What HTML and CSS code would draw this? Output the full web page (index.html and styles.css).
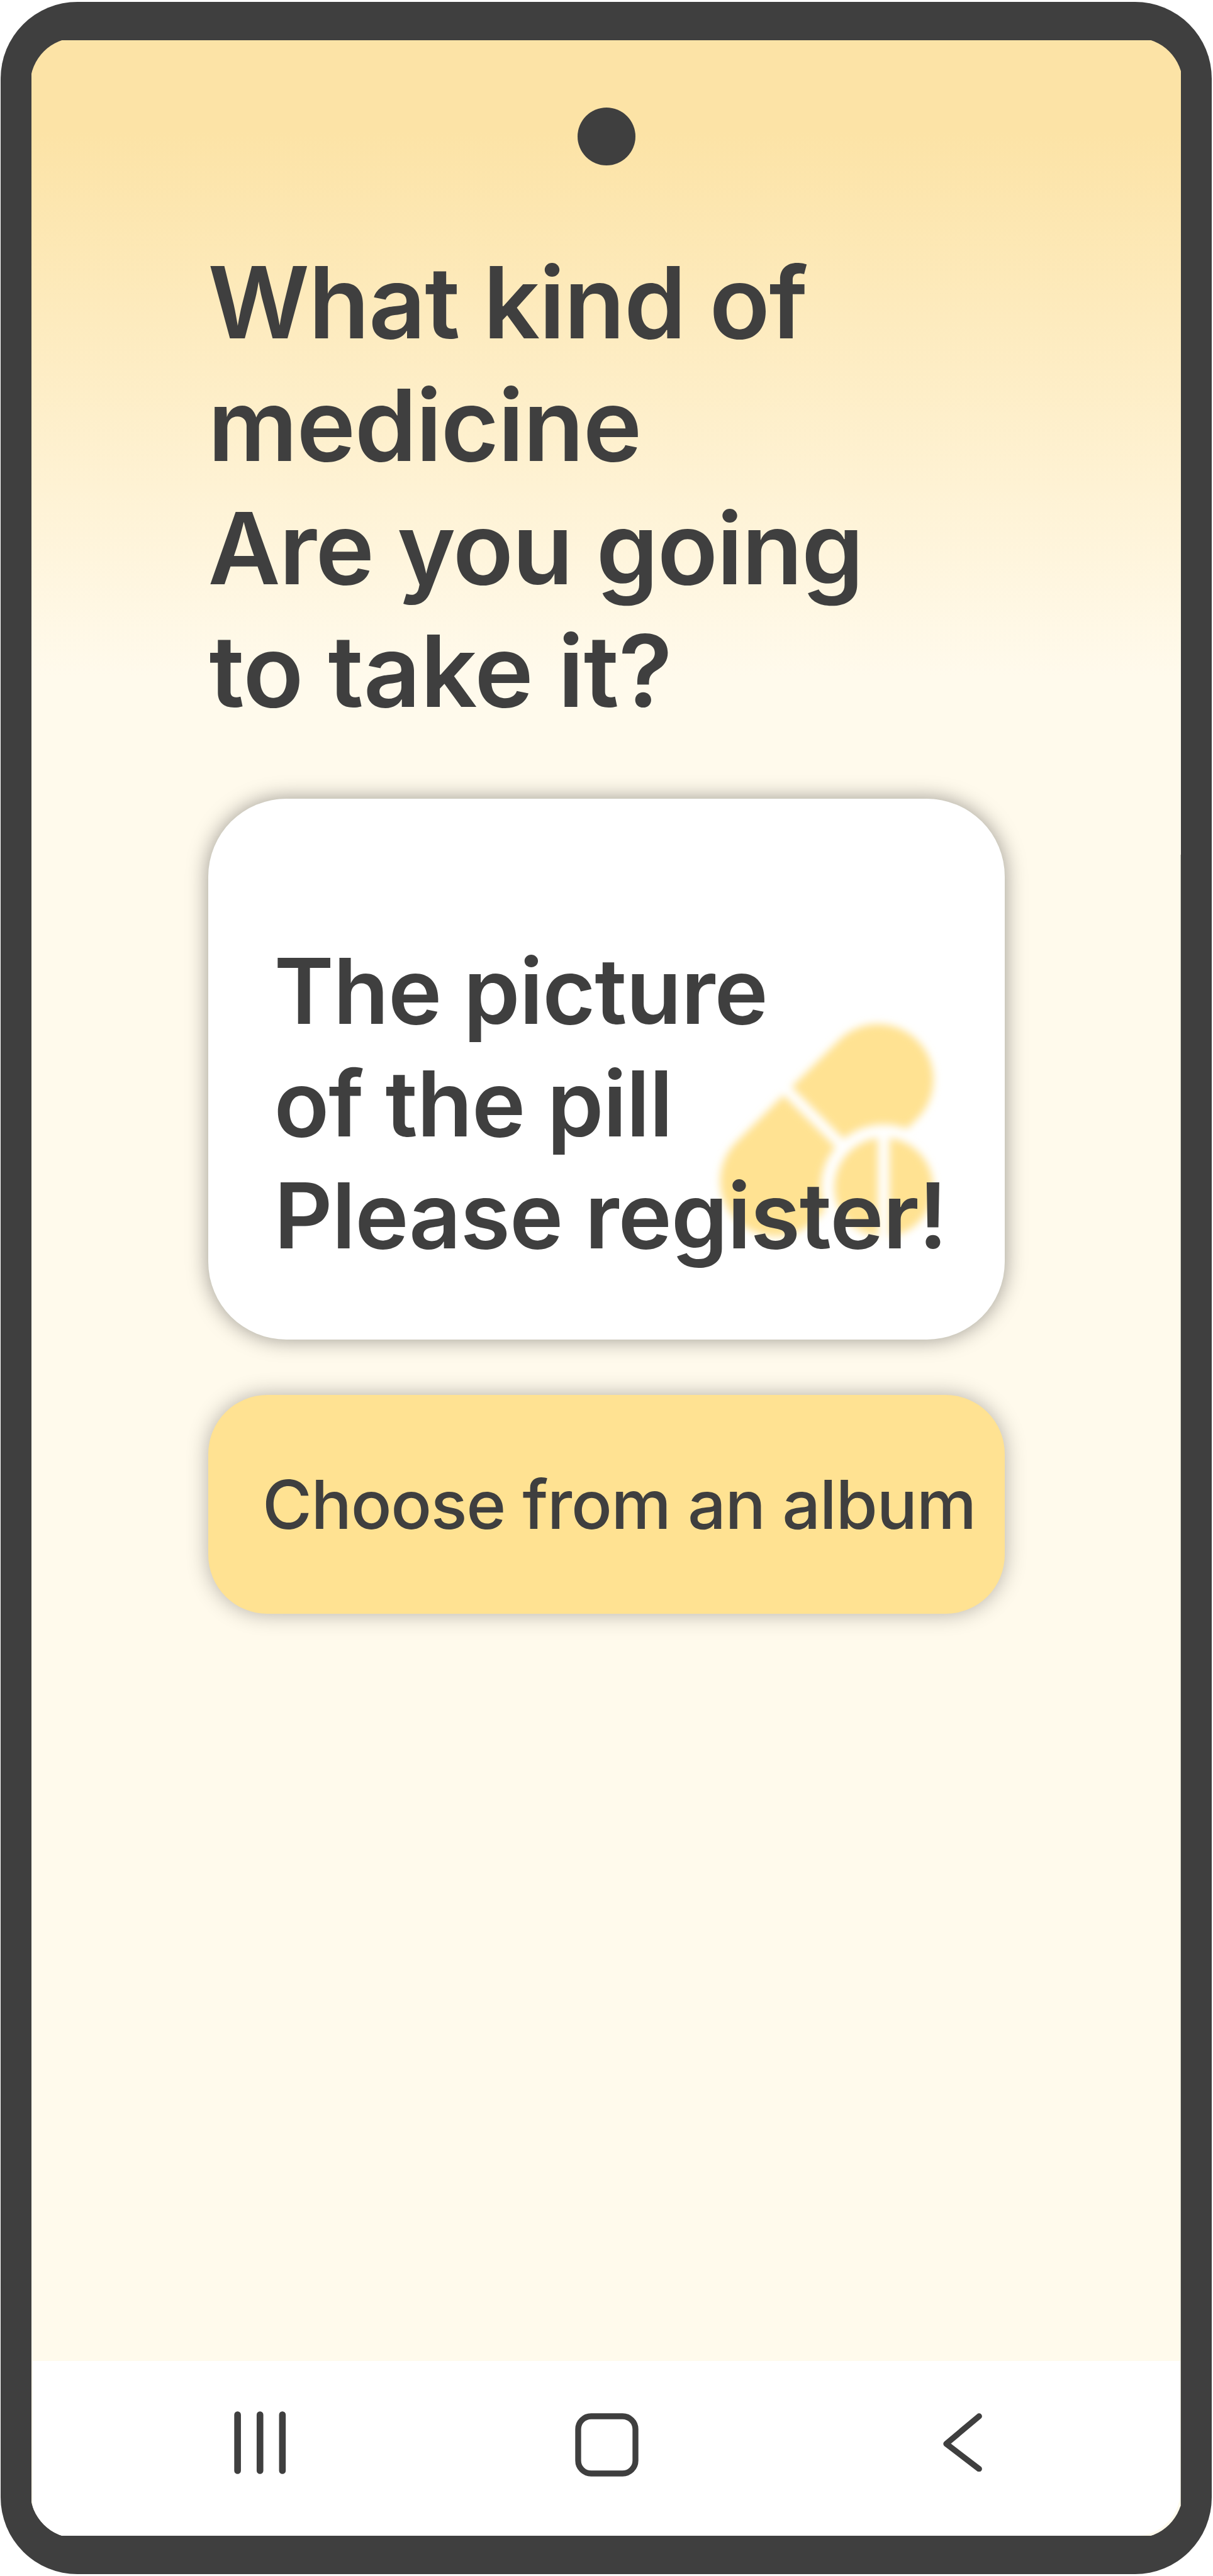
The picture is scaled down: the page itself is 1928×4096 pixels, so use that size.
FILE: index.html
```html
<!DOCTYPE html>
<html lang="en">
<head>
<meta charset="utf-8">
<title>Register medicine</title>
<link rel="stylesheet" href="styles.css">
</head>
<body>
<div class="phone">
  <div class="bezel">
    <div class="screen">
      <div class="status"><span class="camera"></span></div>
      <main class="content">
        <h1 class="question">
          <span class="line">What kind of</span>
          <span class="line">medicine</span>
          <span class="line line-tight">Are you going</span>
          <span class="line line-loose">to take it?</span>
        </h1>
        <section class="card">
          <svg class="pills" viewBox="0 0 640 640" aria-hidden="true">
            <defs>
              <filter id="soft" filterUnits="userSpaceOnUse" x="0" y="0" width="640" height="640"><feGaussianBlur stdDeviation="10.500"/></filter>
              <mask id="cut" maskUnits="userSpaceOnUse" x="0" y="0" width="640" height="640">
                <rect width="640" height="640" fill="#fff"/>
                <circle cx="467" cy="470" r="160" fill="#000"/>
                <path d="M108 111L420 423" stroke="#000" stroke-width="29"/>
              </mask>
            </defs>
            <g filter="url(#soft)" fill="#ffe292">
              <g mask="url(#cut)"><path d="M192 454L452 196" stroke="#ffe292" stroke-width="282" stroke-linecap="round"/></g>
              <path d="M452 344.900V595.100A126 126 0 0 1 452 344.900ZM481 344.900V595.100A126 126 0 0 0 481 344.900Z"/>
            </g>
          </svg>
          <p class="card-text">The picture<br>of the pill<br>Please register!</p>
        </section>
        <button class="album" type="button">Choose from an album</button>
      </main>
      <nav class="navbar">
        <svg class="recent" viewBox="0 0 132 160"><path d="M9 9V151M66 9V151M123 9V151"/></svg>
        <svg class="home" viewBox="0 0 162 162"><rect x="8" y="8" width="146" height="146" rx="33"/></svg>
        <svg class="back" viewBox="0 0 100 150"><path d="M91.500 8L8 78L91.500 142"/></svg>
      </nav>
    </div>
  </div>
</div>
</body>
</html>
```
FILE: styles.css
```css
* { box-sizing: border-box; }

body {
  margin: 0;
  background: #fff;
  font-family: Inter, "Liberation Sans", sans-serif;
  color: #3f3f3f;
}

.phone {
  width: 1925px;
  height: 4090px;
  margin: 3px 0 0 1px;
  padding: 57px 46.500px;
  border-radius: 122px;
  background: #3f3f3f;
}

.bezel {
  height: 100%;
  padding: 4.400px 2.500px;
  border-radius: 74px;
  overflow: hidden;
}

.screen {
  position: relative;
  display: flex;
  flex-direction: column;
  height: 100%;
  background: linear-gradient(#fce3a6 0, #fce3a6 145px, #fffaec 1010px);
}

/* thin edge highlight along the lower right side of the glass */
.screen::after {
  content: "";
  position: absolute;
  top: 1295px;
  right: 0;
  bottom: 0;
  width: 1.500px;
  background: #cfcdc0;
}

.status {
  display: flex;
  justify-content: center;
  padding-top: 107px;
}

.camera {
  width: 92px;
  height: 92px;
  border-radius: 50%;
  background: #3f3f3f;
}

.content {
  display: flex;
  flex-direction: column;
  flex: 1;
  padding: 119.400px 280.500px 0;
}

.question {
  margin: 0;
  height: 886.800px;
  font-size: 158.300px;
  font-weight: 600;
  line-height: 195.400px;
  letter-spacing: -1.500px;
  white-space: nowrap;
}

.line { display: block; }
.line-tight { letter-spacing: -1.800px; }
.line-loose { padding-left: 2px; letter-spacing: -.5px; }

.card {
  position: relative;
  height: 860px;
  padding: 217.800px 105px 0;
  border-radius: 124px;
  background: #fff;
  box-shadow: 0 0 34px rgba(0, 0, 0, .4);
}

.pills {
  position: absolute;
  left: 782px;
  top: 324.500px;
  width: 400px;
  height: 400px;
  fill: none;
}

.card-text {
  position: relative;
  margin: 0;
  font-size: 144.400px;
  font-weight: 600;
  line-height: 178.200px;
  letter-spacing: -1.100px;
  white-space: nowrap;
}

.album {
  height: 348px;
  margin-top: 88px;
  padding: 0 0 0 86.500px;
  border: 0;
  border-radius: 94px;
  background: #ffe292;
  box-shadow: 0 0 34px rgba(0, 0, 0, .3);
  color: inherit;
  font: 500 107.500px Inter, "Liberation Sans", sans-serif;
  letter-spacing: -1.380px;
  text-align: left;
  white-space: nowrap;
}

.navbar {
  display: flex;
  align-items: flex-start;
  height: 278px;
  margin: 0 1.500px 0 2px;
  padding: 80px 0 0 320px;
  border-bottom-right-radius: 70px;
  background: #fff;
}

.navbar svg {
  fill: none;
  stroke: #3f3f3f;
  stroke-linecap: round;
  stroke-linejoin: round;
}

.recent { width: 82.500px; height: 100px; stroke-width: 17; }
.home { width: 101px; height: 101px; margin: 3px 0 0 459px; stroke-width: 15; }
.back { width: 62.500px; height: 93.750px; margin: 3px 0 0 484px; stroke-width: 15; }
```
